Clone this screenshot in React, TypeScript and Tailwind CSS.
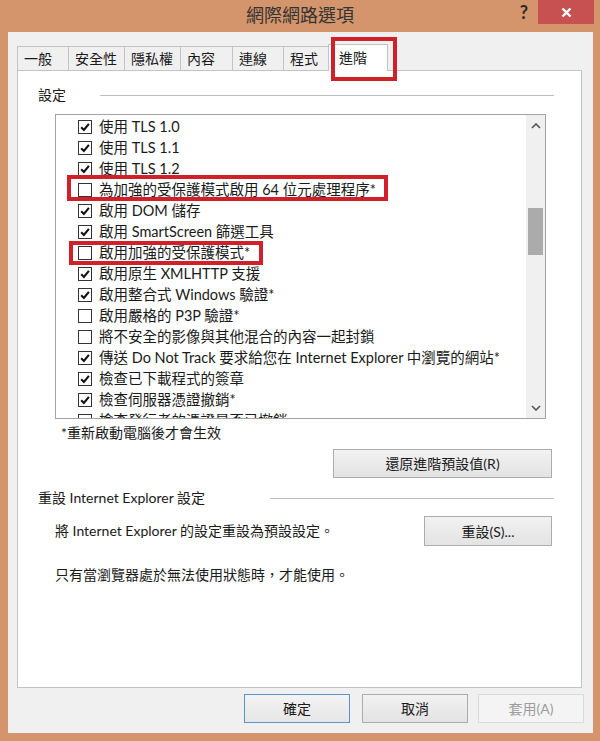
import React from "react";

type Item = { label: string; checked: boolean };

const items: Item[] = [
  { label: "使用 TLS 1.0", checked: true },
  { label: "使用 TLS 1.1", checked: true },
  { label: "使用 TLS 1.2", checked: true },
  { label: "為加強的受保護模式啟用 64 位元處理程序*", checked: false },
  { label: "啟用 DOM 儲存", checked: true },
  { label: "啟用 SmartScreen 篩選工具", checked: true },
  { label: "啟用加強的受保護模式*", checked: false },
  { label: "啟用原生 XMLHTTP 支援", checked: true },
  { label: "啟用整合式 Windows 驗證*", checked: true },
  { label: "啟用嚴格的 P3P 驗證*", checked: false },
  { label: "將不安全的影像與其他混合的內容一起封鎖", checked: false },
  { label: "傳送 Do Not Track 要求給您在 Internet Explorer 中瀏覽的網站*", checked: true },
  { label: "檢查已下載程式的簽章", checked: true },
  { label: "檢查伺服器憑證撤銷*", checked: true },
  { label: "檢查發行者的憑證是否已撤銷", checked: false },
];

const tabs = [
  { label: "一般", w: "w-[51px]" },
  { label: "安全性", w: "w-[56px]" },
  { label: "隱私權", w: "w-[56px]" },
  { label: "內容", w: "w-[52px]" },
  { label: "連線", w: "w-[51px]" },
  { label: "程式", w: "w-[47px]" },
];

function CheckBox({ checked }: { checked: boolean }) {
  return (
    <span className="flex h-[14px] w-[14px] shrink-0 items-center justify-center border border-[#333] bg-white">
      {checked && (
        <svg width="10" height="10" viewBox="0 0 10 10">
          <path d="M1.2 5.2 L3.9 7.9 L8.9 1.8" fill="none" stroke="#111" strokeWidth="2.1" />
        </svg>
      )}
    </span>
  );
}

function Chevron({ up }: { up?: boolean }) {
  return (
    <svg width="10" height="6" viewBox="0 0 10 6">
      <path
        d={up ? "M1 5 L5 1 L9 5" : "M1 1 L5 5 L9 1"}
        fill="none"
        stroke="#555"
        strokeWidth="1.6"
      />
    </svg>
  );
}

function WinButton({
  children,
  className = "",
  kind = "normal",
}: {
  children: React.ReactNode;
  className?: string;
  kind?: "normal" | "default" | "disabled";
}) {
  const look =
    kind === "default"
      ? "border-[#5b93c8] bg-linear-to-b from-[#f3f3f3] to-[#e6e6e6] text-[#1a1a1a]"
      : kind === "disabled"
      ? "border-[#dadada] bg-[#f4f4f4] text-[#9d9d9d]"
      : "border-[#acacac] bg-linear-to-b from-[#f2f2f2] to-[#e3e3e3] text-[#1a1a1a]";
  return (
    <button className={`flex items-center justify-center border text-[14px] ${look} ${className}`}>
      {children}
    </button>
  );
}

export default function App() {
  return (
    <div className="flex h-[741px] w-[600px] flex-col bg-[#d4956c] font-['Lato','Noto_Sans_CJK_TC',sans-serif] text-[#1a1a1a]">
      {/* title bar */}
      <div className="grid h-[32px] shrink-0 grid-cols-[1fr_auto_1fr]">
        <div />
        <div className="pt-[3px] text-[18px] leading-[24px] text-[#333]">網際網路選項</div>
        <div className="flex items-start justify-end pr-[6px]">
          <span className="mr-[10px] mt-[1px] text-[18px] font-bold leading-[22px] text-[#2a2a2a]">?</span>
          <span className="flex h-[24px] w-[56px] items-center justify-center bg-[#c75050]">
            <svg width="11" height="11" viewBox="0 0 11 11">
              <path d="M1.5 1.5 L9.5 9.5 M9.5 1.5 L1.5 9.5" stroke="#fff" strokeWidth="2.4" />
            </svg>
          </span>
        </div>
      </div>

      {/* client area */}
      <div className="mb-[8px] ml-[8px] mr-[7px] flex flex-1 flex-col bg-[#f0f0f0] pl-[9px] pr-[9px] pt-[12px]">
        <div className="flex h-[26px] items-end text-[14px]">
          {tabs.map((t) => (
            <div
              key={t.label}
              className={`flex h-[24px] items-center border-l border-t border-[#c3c3c3] bg-[#f0f0f0] pl-[6px] ${t.w}`}
            >
              {t.label}
            </div>
          ))}
          <div className="relative z-10 -mb-px ml-[-2px] flex h-[27px] w-[60px] items-center border-l border-r border-t border-[#c3c3c3] bg-white pb-[2px] pl-[10px]">
            進階
            <span className="absolute -bottom-[10px] -right-[10px] -top-[8px] left-[2px] border-[4px] border-[#d0202a]" />
          </div>
        </div>

        <div className="mr-[2px] flex h-[618px] shrink-0 flex-col border border-[#c3c3c3] bg-white text-[14px]">
          <div className="ml-[20px] mr-[27px] mt-[14px] flex h-[20px] items-center">
            <span className="w-[62px] leading-[20px]">設定</span>
            <span className="h-px flex-1 bg-[#bdbdbd]" />
          </div>

          <div className="ml-[37px] mt-[9px] flex h-[305px] w-[491px] border border-[#a3a3a3]">
            <div className="flex-1 overflow-hidden pt-[1px] text-[14.5px]">
              {items.map((it, i) => (
                <div
                  key={it.label}
                  className="relative flex h-[21px] items-center gap-[7px] whitespace-nowrap pl-[22px] leading-[21px]"
                >
                  <CheckBox checked={it.checked} />
                  <span>{it.label}</span>
                  {i === 3 && (
                    <span className="absolute left-[11px] top-[-4px] h-[26px] w-[321px] border-[4px] border-[#d0202a]" />
                  )}
                  {i === 6 && (
                    <span className="absolute left-[13px] top-[-1px] h-[24px] w-[194px] border-[4px] border-[#d0202a]" />
                  )}
                </div>
              ))}
            </div>
            <div className="flex w-[19px] flex-col bg-[#f0f0f0]">
              <div className="flex h-[21px] items-center justify-center">
                <Chevron up />
              </div>
              <div className="mx-[2px] mt-[72px] h-[47px] bg-[#ababab]" />
              <div className="mt-auto flex h-[21px] items-center justify-center">
                <Chevron />
              </div>
            </div>
          </div>

          <div className="ml-[43px] mt-[4px] leading-[20px]">*重新啟動電腦後才會生效</div>

          <div className="mr-[29px] mt-[6px] flex justify-end">
            <WinButton className="h-[29px] w-[219px]">還原進階預設值(R)</WinButton>
          </div>

          <div className="ml-[20px] mr-[27px] mt-[10px] flex h-[20px] items-center">
            <span className="w-[232px] leading-[20px]">重設 Internet Explorer 設定</span>
            <span className="h-px flex-1 bg-[#bdbdbd]" />
          </div>

          <div className="ml-[37px] mr-[29px] mt-[8px] flex items-start justify-between">
            <span className="mt-[5px] leading-[20px]">將 Internet Explorer 的設定重設為預設設定。</span>
            <WinButton className="h-[30px] w-[128px]">重設(S)...</WinButton>
          </div>

          <div className="ml-[37px] mt-[19px] leading-[20px]">只有當瀏覽器處於無法使用狀態時，才能使用。</div>
        </div>

        <div className="mt-[6px] flex justify-end">
          <WinButton kind="default" className="h-[29px] w-[106px]">確定</WinButton>
          <WinButton className="ml-[12px] h-[29px] w-[106px]">取消</WinButton>
          <WinButton kind="disabled" className="ml-[10px] h-[29px] w-[106px]">套用(A)</WinButton>
        </div>
      </div>
    </div>
  );
}
